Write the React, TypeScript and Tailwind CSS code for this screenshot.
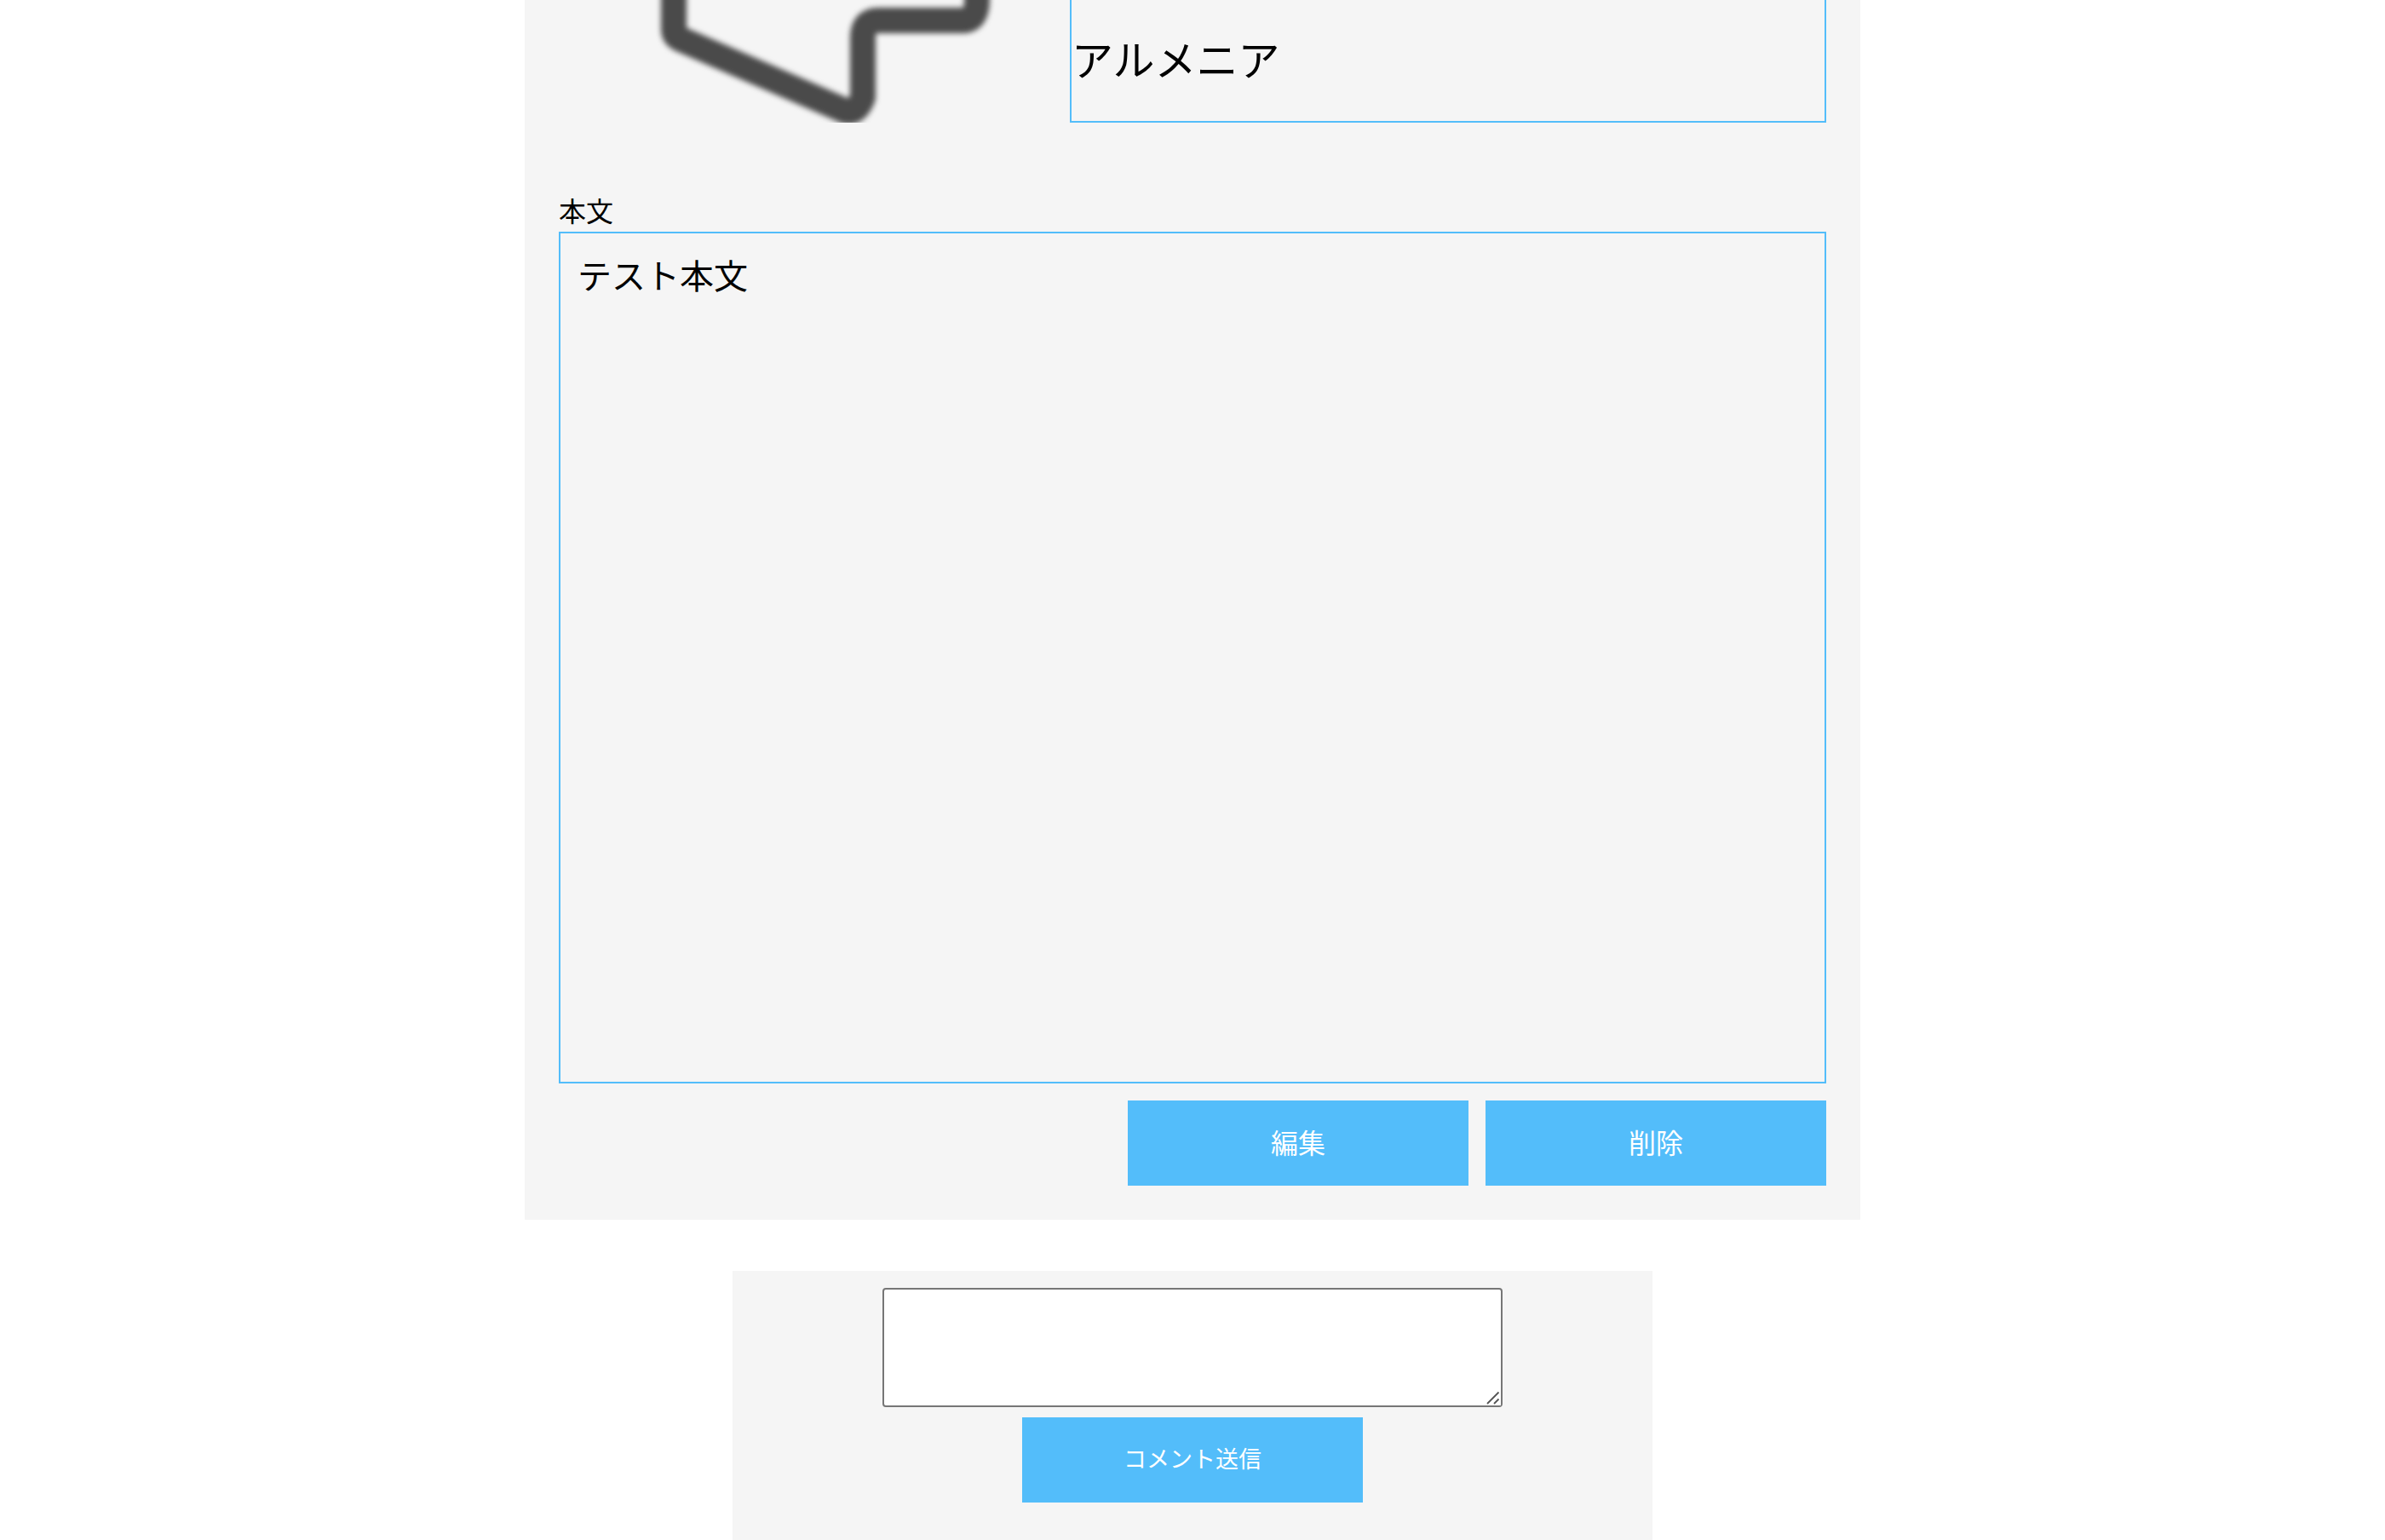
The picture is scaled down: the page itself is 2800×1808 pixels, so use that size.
import type { ReactNode } from "react";

function ActionButton({ children, className }: { children: ReactNode; className: string }) {
  return (
    <button
      type="button"
      className={`h-[100px] w-[400px] bg-[#53bdfa] pb-1 text-center text-white ${className}`}
    >
      {children}
    </button>
  );
}

/* Lower part of the outlined post image, cropped by its frame. */
function PostImage() {
  return (
    <svg
      viewBox="0 0 600 144"
      className="h-36 w-[600px] shrink-0 overflow-hidden"
      role="img"
      aria-label="投稿画像"
    >
      <path
        className="blur-[3px]"
        d="M135 -30 V34 Q135 42 143 46 L336 130 Q350 134 357 114 V42 Q358 24 375 24 H474 Q491 24 491 0 V-30"
        fill="none"
        stroke="#4a4a4a"
        strokeWidth="30"
        strokeLinejoin="round"
      />
    </svg>
  );
}

function ResizeGrip() {
  return (
    <svg
      viewBox="0 0 18 18"
      className="pointer-events-none absolute right-0.5 bottom-0.5 size-[18px] bg-white"
      aria-hidden="true"
    >
      <path d="M2 16 L15.5 2.5 M10 16 L15.5 10.5" fill="none" stroke="#555" strokeWidth="1.8" />
    </svg>
  );
}

export default function App() {
  return (
    <main
      lang="ja"
      className="flex flex-col items-center gap-[60px] bg-white font-['Noto_Sans_CJK_JP',sans-serif] text-black"
    >
      <article className="flex w-[56%] flex-col bg-[#f5f5f5] px-10 pb-10">
        <div className="flex">
          <PostImage />
          <div className="flex h-36 flex-1 items-center border-x-2 border-b-2 border-[#53bdfa] pb-1.5">
            <p className="text-[49px] leading-[60px]">アルメニア</p>
          </div>
        </div>

        <section className="mt-20">
          <h2 className="pb-1 text-[32px] leading-[44px]">本文</h2>
          <div className="min-h-[1000px] border-2 border-[#53bdfa] p-5">
            <p className="text-[40px] leading-[56px]">テスト本文</p>
          </div>
        </section>

        <div className="mt-5 flex justify-end gap-5">
          <ActionButton className="text-[32px]">編集</ActionButton>
          <ActionButton className="text-[32px]">削除</ActionButton>
        </div>
      </article>

      <form className="flex w-full max-w-[1080px] flex-col items-center gap-3 bg-[#f5f5f5] pt-5 pb-11">
        <div className="relative">
          <textarea
            aria-label="コメント"
            className="block h-[140px] w-[728px] resize rounded-[4px] border-2 border-[#767676] bg-white p-1 text-[27px]"
          />
          <ResizeGrip />
        </div>
        <ActionButton className="text-[27px]">コメント送信</ActionButton>
      </form>
    </main>
  );
}
